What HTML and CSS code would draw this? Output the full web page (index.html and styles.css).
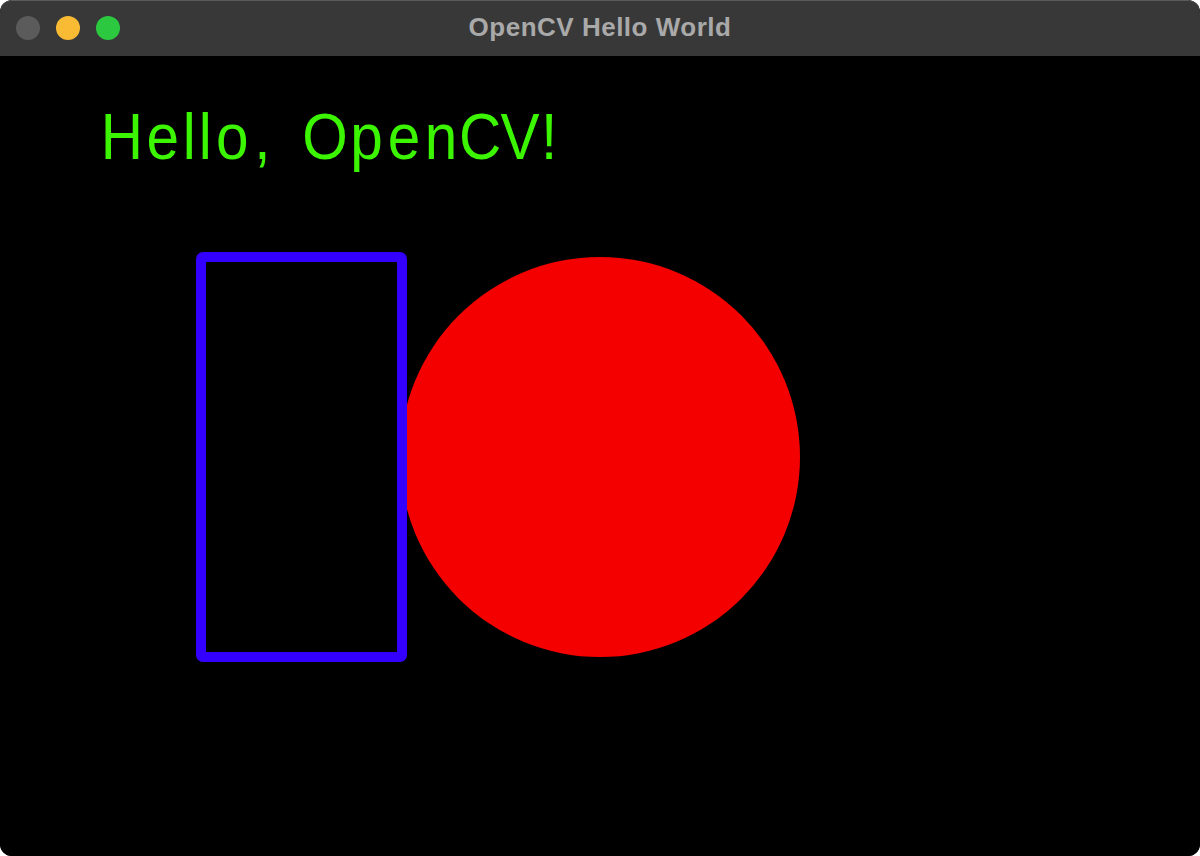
FILE: index.html
```html
<!DOCTYPE html>
<html>
<head>
<meta charset="utf-8">
<title>OpenCV Hello World</title>
<link rel="stylesheet" href="styles.css">
</head>
<body>
<div class="window">
  <div class="titlebar">
    <div class="lights">
      <span class="light light-gray"></span>
      <span class="light light-yellow"></span>
      <span class="light light-green"></span>
    </div>
    <div class="title">OpenCV Hello World</div>
  </div>
  <div class="canvas">
    <svg class="drawing" width="1200" height="800" viewBox="0 0 1200 800" xmlns="http://www.w3.org/2000/svg">
      <circle cx="600" cy="401" r="200" fill="#f50000"/>
      <rect x="201" y="201" width="201" height="400" rx="2" fill="none" stroke="#3300ff" stroke-width="10"/>
      <text class="hello" transform="scale(0.9 1)" x="112 162.7 203 220.7 240 282.4 300 335.8 389.3 430.9 471.9 509.9 556.1 601" y="103">Hello, OpenCV!</text>
    </svg>
  </div>
</div>
</body>
</html>
```

FILE: styles.css
```css
html, body {
  margin: 0;
  padding: 0;
  background: #ffffff;
}
body {
  width: 1200px;
  height: 856px;
  overflow: hidden;
}
.window {
  width: 1200px;
  height: 856px;
  border-radius: 12px;
  overflow: hidden;
  background: #000;
  display: flex;
  flex-direction: column;
}
.titlebar {
  height: 56px;
  flex: 0 0 56px;
  background: #383838;
  border-top: 1px solid #5c5c5c;
  box-sizing: border-box;
  border-radius: 12px 12px 0 0;
  display: flex;
  align-items: center;
  position: relative;
}
.lights {
  display: flex;
  gap: 16px;
  padding-left: 16px;
  margin-top: -2px;
}
.light {
  width: 24px;
  height: 24px;
  border-radius: 50%;
  display: block;
}
.light-gray { background: #5b5b5b; }
.light-yellow { background: #f9bb34; }
.light-green { background: #2bc840; }
.title {
  position: absolute;
  left: 0;
  right: 0;
  top: 0;
  bottom: 0;
  display: flex;
  align-items: center;
  justify-content: center;
  font-family: "Liberation Sans", Arial, sans-serif;
  font-weight: bold;
  font-size: 26px;
  letter-spacing: 0.5px;
  color: #a9a9a9;
  padding-bottom: 3px;
  pointer-events: none;
}
.canvas {
  flex: 1;
  background: #000;
}
.drawing {
  display: block;
}
.hello {
  font-family: "Liberation Sans", Arial, sans-serif;
  font-size: 65px;
  font-weight: 400;
  fill: #3cf500;
}
```
